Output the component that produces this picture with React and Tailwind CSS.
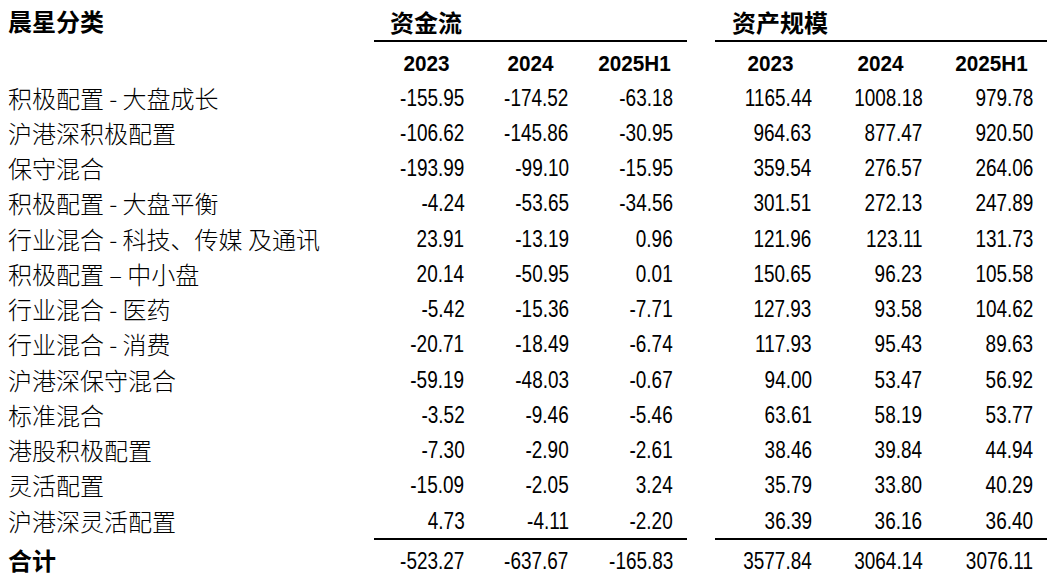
import React from "react";

const COLS =
  "grid grid-cols-[374px_104.33px_104.33px_104.33px_28px_110.67px_110.67px_110.67px]";
const NUM =
  "inline-block origin-right scale-x-[0.79] font-['Liberation_Sans',Arial,sans-serif] text-[24px] leading-none text-black";
const CJK = "font-['Noto_Sans_CJK_SC',sans-serif] text-black";
const YEAR =
  "inline-block scale-x-[0.94] font-['Liberation_Sans',Arial,sans-serif] font-bold text-[22px] leading-none text-black";

const rows = [
  ["积极配置 - 大盘成长", "-155.95", "-174.52", "-63.18", "1165.44", "1008.18", "979.78"],
  ["沪港深积极配置", "-106.62", "-145.86", "-30.95", "964.63", "877.47", "920.50"],
  ["保守混合", "-193.99", "-99.10", "-15.95", "359.54", "276.57", "264.06"],
  ["积极配置 - 大盘平衡", "-4.24", "-53.65", "-34.56", "301.51", "272.13", "247.89"],
  ["行业混合 - 科技、传媒 及通讯", "23.91", "-13.19", "0.96", "121.96", "123.11", "131.73"],
  ["积极配置 – 中小盘", "20.14", "-50.95", "0.01", "150.65", "96.23", "105.58"],
  ["行业混合 - 医药", "-5.42", "-15.36", "-7.71", "127.93", "93.58", "104.62"],
  ["行业混合 - 消费", "-20.71", "-18.49", "-6.74", "117.93", "95.43", "89.63"],
  ["沪港深保守混合", "-59.19", "-48.03", "-0.67", "94.00", "53.47", "56.92"],
  ["标准混合", "-3.52", "-9.46", "-5.46", "63.61", "58.19", "53.77"],
  ["港股积极配置", "-7.30", "-2.90", "-2.61", "38.46", "39.84", "44.94"],
  ["灵活配置", "-15.09", "-2.05", "3.24", "35.79", "33.80", "40.29"],
  ["沪港深灵活配置", "4.73", "-4.11", "-2.20", "36.39", "36.16", "36.40"],
];

const total = ["合计", "-523.27", "-637.67", "-165.83", "3577.84", "3064.14", "3076.11"];

function NumCell({ v, border }) {
  return (
    <div
      className={
        "flex items-center justify-end pr-[14px] " +
        (border ? "border-t-2 border-black" : "")
      }
    >
      <span className={NUM}>{v}</span>
    </div>
  );
}

function DataRow({ r }) {
  return (
    <div className={COLS + " h-[35.25px]"}>
      <div className="flex items-center pl-[8px]">
        <span className={CJK + " text-[24px] leading-none font-light whitespace-pre"}>{r[0]}</span>
      </div>
      <NumCell v={r[1]} />
      <NumCell v={r[2]} />
      <NumCell v={r[3]} />
      <div />
      <NumCell v={r[4]} />
      <NumCell v={r[5]} />
      <NumCell v={r[6]} />
    </div>
  );
}

export default function App() {
  return (
    <div className="w-[1062px] h-[577px] bg-white overflow-hidden">
      {/* header row */}
      <div className={COLS + " h-[42px]"}>
        <div className="flex items-start pl-[8px] pt-[9px]">
          <span className={CJK + " text-[24px] leading-none font-bold"}>晨星分类</span>
        </div>
        <div className="col-span-3 flex items-end pl-[16px] pb-[6px] border-b-2 border-black">
          <span className={CJK + " text-[24px] leading-none font-bold"}>资金流</span>
        </div>
        <div />
        <div className="col-span-3 flex items-end pl-[17px] pb-[6px] border-b-2 border-black">
          <span className={CJK + " text-[24px] leading-none font-bold"}>资产规模</span>
        </div>
      </div>
      {/* year row */}
      <div className={COLS + " h-[38px]"}>
        <div />
        {["2023", "2024", "2025H1"].map((y) => (
          <div key={"a" + y} className="flex items-center justify-center pt-[6px]">
            <span className={YEAR}>{y}</span>
          </div>
        ))}
        <div />
        {["2023", "2024", "2025H1"].map((y) => (
          <div key={"b" + y} className="flex items-center justify-center pt-[6px]">
            <span className={YEAR}>{y}</span>
          </div>
        ))}
      </div>
      {rows.map((r) => (
        <DataRow key={r[0]} r={r} />
      ))}
      {/* total row */}
      <div className={COLS + " h-[44px]"}>
        <div className="flex items-center pl-[8px]">
          <span className={CJK + " text-[24px] leading-none font-bold"}>{total[0]}</span>
        </div>
        <NumCell v={total[1]} border />
        <NumCell v={total[2]} border />
        <NumCell v={total[3]} border />
        <div />
        <NumCell v={total[4]} border />
        <NumCell v={total[5]} border />
        <NumCell v={total[6]} border />
      </div>
    </div>
  );
}
